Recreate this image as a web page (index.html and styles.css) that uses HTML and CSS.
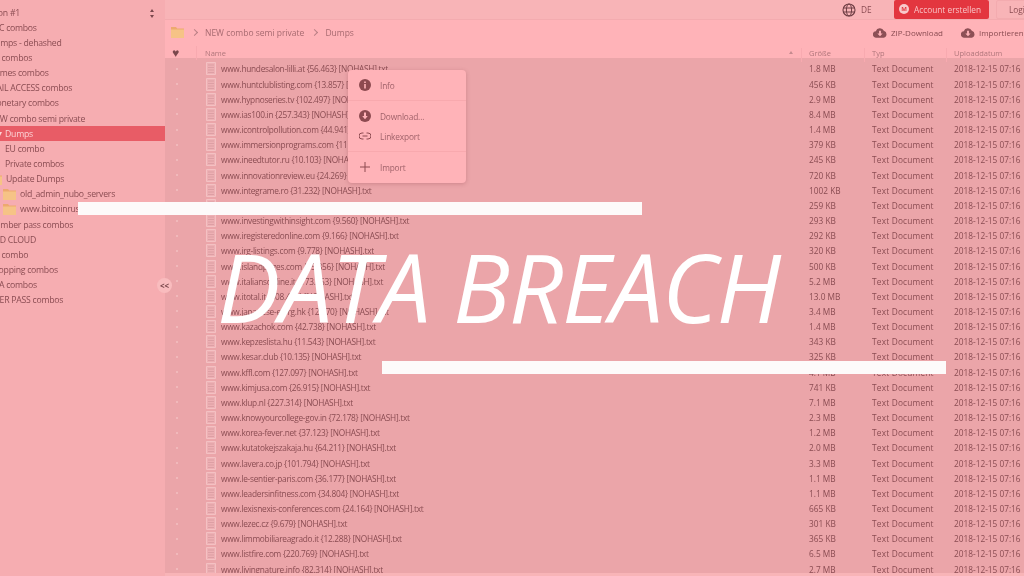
FILE: index.html
```html
<!DOCTYPE html>
<html lang="de">
<head>
  <meta charset="UTF-8" />
  <title>Data Breach</title>
  <link rel="stylesheet" href="styles.css">
</head>
<body>
  <svg class="defs" width="0" height="0">
    <symbol id="file" viewBox="0 0 10 13">
      <path d="M.5.5h9v12h-9z" fill="#eeb0b4" stroke="#f5c6c8" stroke-width=".8"/>
      <path d="M2 3h6M2 5.500h6M2 8h6M2 10.500h6" stroke="#d29499" stroke-width=".6"/>
    </symbol>
    <symbol id="folder" viewBox="0 0 13 12">
      <path d="M0 1h5l1.2 1.500H13V12H0z" fill="#eda96f"/>
      <path d="M0 3.500h13V12H0z" fill="#f6c386"/>
    </symbol>
    <symbol id="cloud" viewBox="0 0 15 11">
      <path d="M3.500 11A3.400 3.400 0 0 1 3 4.200 4.600 4.600 0 0 1 11.600 3.600 3.800 3.800 0 0 1 11.500 11z" fill="#8d5056"/>
      <path d="M6.500 3.500h2v3h1.800L7.500 9.500 4.700 6.500h1.800z" fill="#ffb3b8"/>
    </symbol>
  </svg>

  <div class="page">
    <aside class="sidebar">
      <div class="drive-select"><span>Section #1</span><span class="updown"></span></div>
      <ul class="tree">
        <li>BTC combos</li>
        <li>Dumps - dehashed</li>
        <li>CC combos</li>
        <li>Games combos</li>
        <li>MAIL ACCESS combos</li>
        <li>Monetary combos</li>
        <li>NEW combo semi private</li>
        <li class="level-1 selected">Dumps</li>
        <li class="level-1">EU combo</li>
        <li class="level-1">Private combos</li>
        <li class="level-1 has-sliver"><svg class="tree-folder sliver"><use href="#folder"/></svg>Update Dumps</li>
        <li class="level-2"><svg class="tree-folder"><use href="#folder"/></svg>old_admin_nubo_servers</li>
        <li class="level-2"><svg class="tree-folder"><use href="#folder"/></svg>www.bitcoinrus</li>
        <li>Number pass combos</li>
        <li>OLD CLOUD</li>
        <li>CC combo</li>
        <li>Shopping combos</li>
        <li>VPA combos</li>
        <li class="shift">SUPER PASS combos</li>
      </ul>
      <button class="collapse">&lt;&lt;</button>
    </aside>

    <main class="content">
      <header class="topbar">
        <svg class="globe" viewBox="0 0 14 14"><circle cx="7" cy="7" r="6" fill="none" stroke="#6f3e44" stroke-width="1.100"/><ellipse cx="7" cy="7" rx="2.600" ry="6" fill="none" stroke="#6f3e44"/><path d="M1 5h12M1 9h12" stroke="#6f3e44"/></svg>
        <span class="lang">DE</span>
        <a class="btn-account"><span class="mega-logo">M</span>Account erstellen</a>
        <a class="btn-login">Login</a>
      </header>

      <div class="toolbar">
        <svg class="crumb-folder"><use href="#folder"/></svg>
        <span class="chevron"></span>
        <span class="crumb">NEW combo semi private</span>
        <span class="chevron"></span>
        <span class="crumb">Dumps</span>
        <span class="tool-zip"><svg class="cloud"><use href="#cloud"/></svg>ZIP-Download</span>
        <span class="tool-import"><svg class="cloud"><use href="#cloud"/></svg>Importieren</span>
      </div>

      <div class="columns">
        <span class="heart">&#9829;</span>
        <span class="col-name">Name<b class="sort"></b></span>
        <span class="col">Größe</span>
        <span class="col">Typ</span>
        <span class="col">Uploaddatum</span>
      </div>

      <div class="files">
        <div class="file"><i></i><span><svg><use href="#file"/></svg>www.hundesalon-lilli.at {56.463} [NOHASH].txt</span><span>1.8 MB</span><span>Text Document</span><span>2018-12-15 07:16</span></div>
        <div class="file"><i></i><span><svg><use href="#file"/></svg>www.huntclublisting.com {13.857} [NOHASH].txt</span><span>456 KB</span><span>Text Document</span><span>2018-12-15 07:16</span></div>
        <div class="file"><i></i><span><svg><use href="#file"/></svg>www.hypnoseries.tv {102.497} [NOHASH].txt</span><span>2.9 MB</span><span>Text Document</span><span>2018-12-15 07:16</span></div>
        <div class="file"><i></i><span><svg><use href="#file"/></svg>www.ias100.in {257.343} [NOHASH].txt</span><span>8.4 MB</span><span>Text Document</span><span>2018-12-15 07:16</span></div>
        <div class="file"><i></i><span><svg><use href="#file"/></svg>www.icontrolpollution.com {44.941} [NOHASH].txt</span><span>1.4 MB</span><span>Text Document</span><span>2018-12-15 07:16</span></div>
        <div class="file"><i></i><span><svg><use href="#file"/></svg>www.immersionprograms.com {11.369} [NOHASH].txt</span><span>379 KB</span><span>Text Document</span><span>2018-12-15 07:16</span></div>
        <div class="file"><i></i><span><svg><use href="#file"/></svg>www.ineedtutor.ru {10.103} [NOHASH].txt</span><span>245 KB</span><span>Text Document</span><span>2018-12-15 07:16</span></div>
        <div class="file"><i></i><span><svg><use href="#file"/></svg>www.innovationreview.eu {24.269} [NOHASH].txt</span><span>720 KB</span><span>Text Document</span><span>2018-12-15 07:16</span></div>
        <div class="file"><i></i><span><svg><use href="#file"/></svg>www.integrame.ro {31.232} [NOHASH].txt</span><span>1002 KB</span><span>Text Document</span><span>2018-12-15 07:16</span></div>
        <div class="file"><i></i><span><svg><use href="#file"/></svg></span><span>259 KB</span><span>Text Document</span><span>2018-12-15 07:16</span></div>
        <div class="file"><i></i><span><svg><use href="#file"/></svg>www.investingwithinsight.com {9.560} [NOHASH].txt</span><span>293 KB</span><span>Text Document</span><span>2018-12-15 07:16</span></div>
        <div class="file"><i></i><span><svg><use href="#file"/></svg>www.iregisteredonline.com {9.166} [NOHASH].txt</span><span>292 KB</span><span>Text Document</span><span>2018-12-15 07:16</span></div>
        <div class="file"><i></i><span><svg><use href="#file"/></svg>www.irg-listings.com {9.778} [NOHASH].txt</span><span>320 KB</span><span>Text Document</span><span>2018-12-15 07:16</span></div>
        <div class="file"><i></i><span><svg><use href="#file"/></svg>www.islandpages.com {15.856} [NOHASH].txt</span><span>500 KB</span><span>Text Document</span><span>2018-12-15 07:16</span></div>
        <div class="file"><i></i><span><svg><use href="#file"/></svg>www.italiansonline.it {173.563} [NOHASH].txt</span><span>5.2 MB</span><span>Text Document</span><span>2018-12-15 07:16</span></div>
        <div class="file"><i></i><span><svg><use href="#file"/></svg>www.itotal.it {508.411} [NOHASH].txt</span><span>13.0 MB</span><span>Text Document</span><span>2018-12-15 07:16</span></div>
        <div class="file"><i></i><span><svg><use href="#file"/></svg>www.japanese-e.org.hk {12.970} [NOHASH].txt</span><span>3.4 MB</span><span>Text Document</span><span>2018-12-15 07:16</span></div>
        <div class="file"><i></i><span><svg><use href="#file"/></svg>www.kazachok.com {42.738} [NOHASH].txt</span><span>1.4 MB</span><span>Text Document</span><span>2018-12-15 07:16</span></div>
        <div class="file"><i></i><span><svg><use href="#file"/></svg>www.kepzeslista.hu {11.543} [NOHASH].txt</span><span>343 KB</span><span>Text Document</span><span>2018-12-15 07:16</span></div>
        <div class="file"><i></i><span><svg><use href="#file"/></svg>www.kesar.club {10.135} [NOHASH].txt</span><span>325 KB</span><span>Text Document</span><span>2018-12-15 07:16</span></div>
        <div class="file"><i></i><span><svg><use href="#file"/></svg>www.kffl.com {127.097} [NOHASH].txt</span><span>4.1 MB</span><span>Text Document</span><span>2018-12-15 07:16</span></div>
        <div class="file"><i></i><span><svg><use href="#file"/></svg>www.kimjusa.com {26.915} [NOHASH].txt</span><span>741 KB</span><span>Text Document</span><span>2018-12-15 07:16</span></div>
        <div class="file"><i></i><span><svg><use href="#file"/></svg>www.klup.nl {227.314} [NOHASH].txt</span><span>7.1 MB</span><span>Text Document</span><span>2018-12-15 07:16</span></div>
        <div class="file"><i></i><span><svg><use href="#file"/></svg>www.knowyourcollege-gov.in {72.178} [NOHASH].txt</span><span>2.3 MB</span><span>Text Document</span><span>2018-12-15 07:16</span></div>
        <div class="file"><i></i><span><svg><use href="#file"/></svg>www.korea-fever.net {37.123} [NOHASH].txt</span><span>1.2 MB</span><span>Text Document</span><span>2018-12-15 07:16</span></div>
        <div class="file"><i></i><span><svg><use href="#file"/></svg>www.kutatokejszakaja.hu {64.211} [NOHASH].txt</span><span>2.0 MB</span><span>Text Document</span><span>2018-12-15 07:16</span></div>
        <div class="file"><i></i><span><svg><use href="#file"/></svg>www.lavera.co.jp {101.794} [NOHASH].txt</span><span>3.3 MB</span><span>Text Document</span><span>2018-12-15 07:16</span></div>
        <div class="file"><i></i><span><svg><use href="#file"/></svg>www.le-sentier-paris.com {36.177} [NOHASH].txt</span><span>1.1 MB</span><span>Text Document</span><span>2018-12-15 07:16</span></div>
        <div class="file"><i></i><span><svg><use href="#file"/></svg>www.leadersinfitness.com {34.804} [NOHASH].txt</span><span>1.1 MB</span><span>Text Document</span><span>2018-12-15 07:16</span></div>
        <div class="file"><i></i><span><svg><use href="#file"/></svg>www.lexisnexis-conferences.com {24.164} [NOHASH].txt</span><span>665 KB</span><span>Text Document</span><span>2018-12-15 07:16</span></div>
        <div class="file"><i></i><span><svg><use href="#file"/></svg>www.lezec.cz {9.679} [NOHASH].txt</span><span>301 KB</span><span>Text Document</span><span>2018-12-15 07:16</span></div>
        <div class="file"><i></i><span><svg><use href="#file"/></svg>www.limmobiliareagrado.it {12.288} [NOHASH].txt</span><span>365 KB</span><span>Text Document</span><span>2018-12-15 07:16</span></div>
        <div class="file"><i></i><span><svg><use href="#file"/></svg>www.listfire.com {220.769} [NOHASH].txt</span><span>6.5 MB</span><span>Text Document</span><span>2018-12-15 07:16</span></div>
        <div class="file"><i></i><span><svg><use href="#file"/></svg>www.livingnature.info {82.314} [NOHASH].txt</span><span>2.7 MB</span><span>Text Document</span><span>2018-12-15 07:16</span></div>
      </div>
      <div class="bottom-strip"></div>
    </main>

    <!-- context menu -->
    <div class="menu">
      <div class="menu-item">
        <svg viewBox="0 0 12 12"><circle cx="6" cy="6" r="6" fill="#8d4a50"/><path d="M5.200 5h1.600v4.500H5.200zM5.200 2.500h1.600V4H5.200z" fill="#ffb3b8"/></svg>Info
      </div>
      <div class="menu-sep"></div>
      <div class="menu-item">
        <svg viewBox="0 0 12 12"><circle cx="6" cy="6" r="6" fill="#8d4a50"/><path d="M5 2.500h2V6h1.800L6 9.300 3.200 6H5z" fill="#ffb3b8"/></svg>Download...
      </div>
      <div class="menu-item">
        <svg viewBox="0 0 12 8"><path d="M4.500 1H3a3 3 0 0 0 0 6h1.500M7.500 1H9a3 3 0 0 1 0 6H7.500M3.500 4h5" fill="none" stroke="#8d4a50" stroke-width="1"/></svg>Linkexport
      </div>
      <div class="menu-sep"></div>
      <div class="menu-item">
        <svg viewBox="0 0 12 12"><path d="M6 1v10M1 6h10" stroke="#8d4a50" stroke-width="1"/></svg>Import
      </div>
    </div>

    <!-- banner over the page -->
    <div class="bar bar-top"></div>
    <div class="bar bar-bottom"></div>
    <div class="headline">DATA BREACH</div>
  </div>
</body>
</html>
```

FILE: styles.css
```css
* {
  box-sizing: border-box;
}

html, body {
  margin: 0;
  height: 100%;
  overflow: hidden;
}

body {
  font-family: "Open Sans", "Noto Sans", sans-serif;
  font-size: 8.300px;
  color: #8a4c52;
}

.defs {
  position: absolute;
}

.page {
  position: relative;
  display: flex;
  width: 1024px;
  height: 576px;
  overflow: hidden;
  filter: blur(0.3px);
}

/* sidebar */
.sidebar {
  position: relative;
  width: 165px;
  flex: none;
  background-color: #f6adb1;
}

.drive-select {
  display: flex;
  justify-content: space-between;
  align-items: center;
  height: 20px;
  padding: 6px 10px 0 0;
  margin-left: -20px;
  font-size: 8.700px;
  letter-spacing: -0.25px;
}

.updown {
  position: relative;
  width: 5px;
  height: 9px;
}

.updown::before,
.updown::after {
  content: "";
  position: absolute;
  left: 0;
  border-left: 2.500px solid transparent;
  border-right: 2.500px solid transparent;
}

.updown::before {
  top: 0;
  border-bottom: 3.500px solid #7a474c;
}

.updown::after {
  bottom: 0;
  border-top: 3.500px solid #7a474c;
}

.tree {
  list-style: none;
  margin: 0;
  padding: 0;
  overflow: hidden;
  font-size: 8.700px;
  letter-spacing: -0.25px;
}

.tree li {
  display: flex;
  align-items: center;
  height: 15.170px;
  margin-left: -11px;
  white-space: nowrap;
}

.tree li.shift {
  margin-left: -16px;
}

.tree li.level-1 {
  margin-left: 0;
  padding-left: 5px;
}

.tree li.level-2 {
  margin-left: 0;
  padding-left: 3px;
}

.tree li.has-sliver {
  margin-left: -11px;
  padding-left: 0;
}

.tree li.selected {
  position: relative;
  background-color: #e85c66;
  color: #fbd3d5;
}

.tree li.selected::before {
  content: "";
  position: absolute;
  left: -2px;
  top: 6px;
  border-left: 2.500px solid transparent;
  border-right: 2.500px solid transparent;
  border-top: 4px solid #fbd3d5;
}

.tree-folder {
  flex: none;
  width: 13px;
  height: 12px;
  margin-right: 4px;
}

.collapse {
  position: absolute;
  top: 278px;
  right: -7px;
  width: 15px;
  height: 15px;
  padding: 0;
  border: none;
  border-radius: 50%;
  background-color: #f9bcbe;
  color: #7a474c;
  font-family: inherit;
  font-size: 8px;
  font-weight: bold;
  line-height: 14px;
  z-index: 1;
}

/* right side */
.content {
  flex: 1;
  min-width: 0;
  display: flex;
  flex-direction: column;
  background-color: #eba5a9;
}

.topbar {
  display: flex;
  align-items: center;
  height: 20px;
  flex: none;
  padding-left: 677px;
  background-color: #f8b4b7;
  border-bottom: 1px solid #f3abaf;
  white-space: nowrap;
}

.globe {
  flex: none;
  width: 14px;
  height: 14px;
}

.lang {
  flex: none;
  width: 33px;
  margin-left: 5px;
}

.btn-account {
  flex: none;
  display: flex;
  align-items: center;
  width: 95px;
  height: 19px;
  margin-top: -1px;
  padding-left: 5px;
  border-radius: 2px;
  background-color: #e3363f;
  color: #f9c3c6;
}

.mega-logo {
  width: 10px;
  height: 10px;
  margin-right: 5px;
  border-radius: 50%;
  background-color: #f8c9cb;
  color: #e3363f;
  font-size: 6px;
  font-weight: bold;
  line-height: 10px;
  text-align: center;
}

.btn-login {
  flex: none;
  height: 19px;
  margin-top: -1px;
  margin-left: 7px;
  padding: 3px 12px;
  border: 1px solid #f3abaf;
  border-radius: 2px;
}

.toolbar {
  display: flex;
  align-items: center;
  height: 24px;
  flex: none;
  padding-left: 6px;
  background-color: #ffb3b8;
  white-space: nowrap;
  font-size: 8.500px;
}

.crumb-folder {
  flex: none;
  width: 13px;
  height: 12px;
}

.chevron {
  flex: none;
  width: 5px;
  height: 5px;
  margin: 0 8px 0 8px;
  border-top: 1px solid #b87f84;
  border-right: 1px solid #b87f84;
  transform: rotate(45deg);
}

.crumb {
  color: #a76a70;
}

.cloud {
  flex: none;
  width: 14px;
  height: 11px;
  margin-right: 4px;
}

.tool-zip {
  flex: none;
  display: flex;
  align-items: center;
  width: 88px;
  margin-left: 519px;
  font-size: 8px;
}

.tool-import {
  flex: none;
  display: flex;
  align-items: center;
  font-size: 8px;
}

.columns,
.file {
  display: grid;
  grid-template-columns: 31px 613px 63px 82px auto;
  white-space: nowrap;
}

.columns {
  height: 14px;
  flex: none;
  align-items: center;
  background-color: #ffb3b8;
  color: #b0767b;
  font-size: 7.500px;
}

.col-name {
  display: flex;
  justify-content: space-between;
  align-items: center;
  height: 14px;
  padding: 0 16px 0 8px;
  border-left: 1px solid #f8aab0;
}

.sort {
  width: 0;
  height: 0;
  border-left: 2.500px solid transparent;
  border-right: 2.500px solid transparent;
  border-bottom: 3px solid #c58a8f;
}

.col {
  position: relative;
}

.col::before {
  content: "";
  position: absolute;
  left: -8px;
  top: 0;
  height: 14px;
  border-left: 1px solid #f8aab0;
}

.heart {
  padding-left: 7px;
  color: #7a474c;
  font-size: 12px;
}

.files {
  flex: 1;
  min-height: 0;
  padding-top: 3.400px;
  overflow: hidden;
}

.file {
  height: 15.170px;
  align-items: center;
}

.file i {
  width: 2px;
  height: 2px;
  margin-left: 11px;
  border-radius: 50%;
  background-color: #f3c0c2;
}

.file span:nth-child(2) {
  display: flex;
  align-items: center;
  padding-left: 10px;
  letter-spacing: -0.27px;
}

.file span:nth-child(4) {
  letter-spacing: 0.2px;
}

.file svg {
  flex: none;
  width: 10px;
  height: 13px;
  margin-right: 5px;
}

.bottom-strip {
  height: 3px;
  flex: none;
  background-color: #f8b4b7;
}

/* context menu */
.menu {
  position: absolute;
  left: 348px;
  top: 70px;
  width: 118px;
  height: 113px;
  padding-top: 5px;
  border-radius: 4px;
  background-color: #ffb3b8;
  box-shadow: 0 1px 4px rgba(140, 60, 70, 0.3);
  color: #a0626a;
  letter-spacing: -0.15px;
}

.menu-item {
  display: flex;
  align-items: center;
  height: 20px;
  padding-left: 11px;
}

.menu-item svg {
  flex: none;
  width: 12px;
  height: 12px;
  margin-right: 9px;
}

.menu-sep {
  height: 1px;
  margin: 5px 0;
  background-color: #f8a9ae;
}

/* banner */
.bar {
  position: absolute;
  height: 13px;
  width: 564px;
  background-color: #fdfafa;
}

.bar-top {
  left: 78px;
  top: 202px;
}

.bar-bottom {
  left: 382px;
  top: 361px;
}

.headline {
  position: absolute;
  left: 217px;
  top: 221px;
  font-family: "Open Sans", sans-serif;
  font-size: 95px;
  font-style: italic;
  font-weight: 500;
  letter-spacing: -1.200px;
  line-height: 130px;
  color: #fff;
  white-space: nowrap;
}
```
